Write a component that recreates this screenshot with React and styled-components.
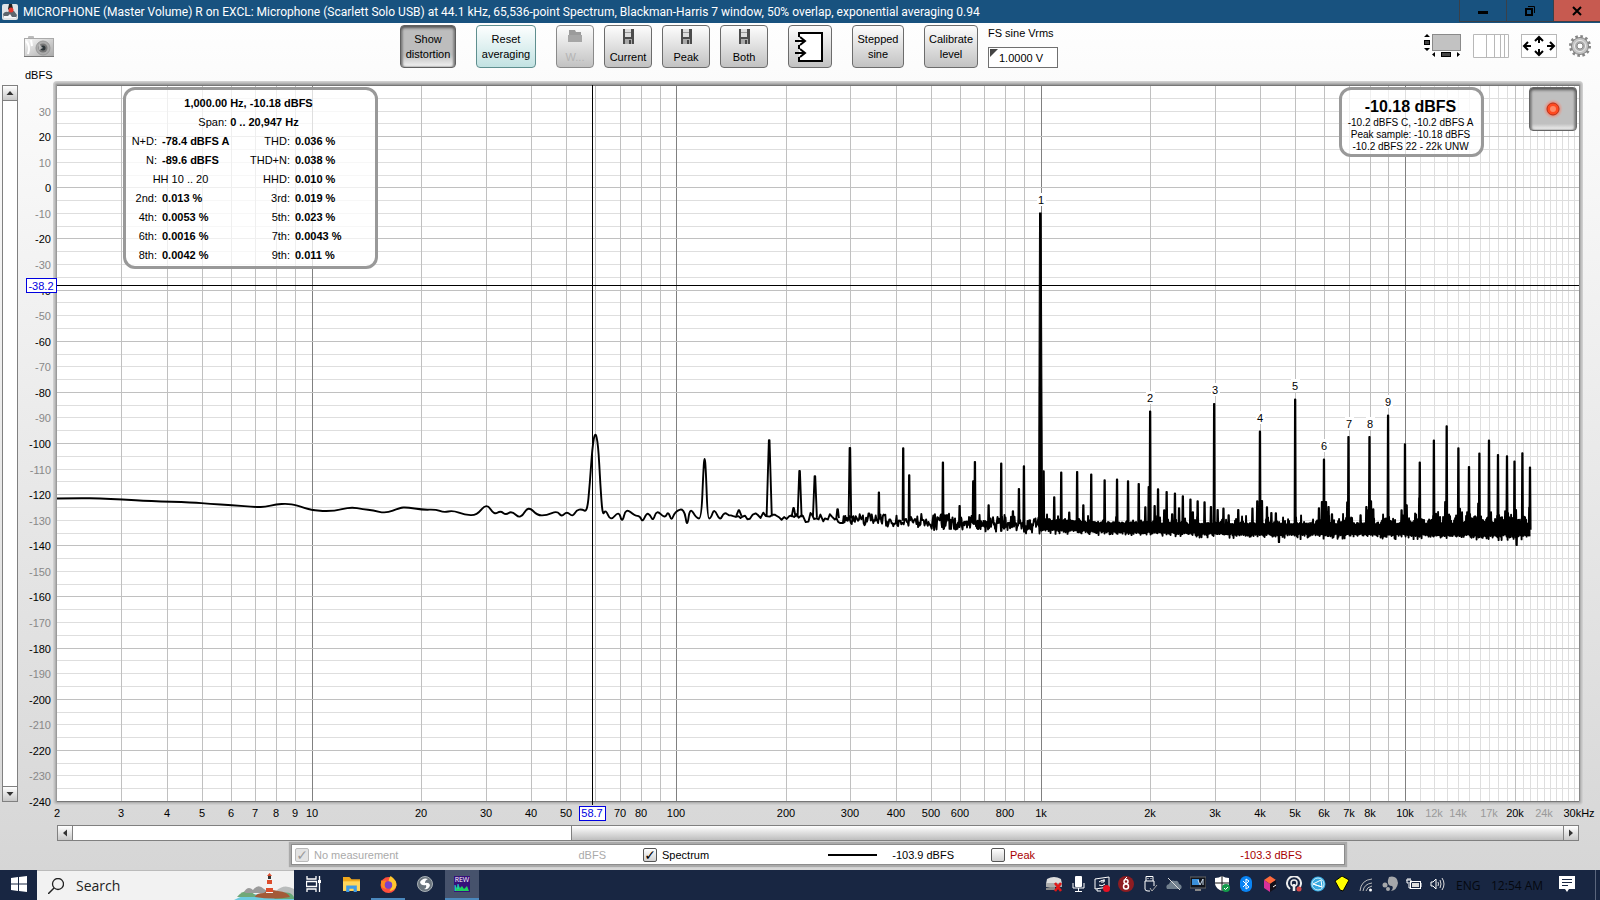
import React, { useLayoutEffect, useRef, useState } from "react";
import styled, { createGlobalStyle } from "styled-components";

const Colors = {
    title: "#18527f",
    taskbar: "#182642",
    line: "#808080",
    peak: "#a80000",
    cursor: "#0000e0",
};

const Global = createGlobalStyle`
    *{
        box-sizing: border-box;
    }
    body{
        margin: 0;
        font-family: "Liberation Sans", Arial, sans-serif;
        font-size: 11px;
        color: #000;
    }
    button, input{
        font-family: inherit;
        font-size: inherit;
        color: inherit;
        margin: 0;
        padding: 0;
    }
`;

const Window = styled.div`
    height: 100vh;
    min-height: 480px;
    display: flex;
    flex-direction: column;
    overflow: hidden;
    background: linear-gradient(#fefefe 23px, #d6d6d6 870px);
`;

/* title bar */

const TitleBar = styled.header`
    display: flex;
    align-items: center;
    height: 23px;
    flex: none;
    padding-left: 2px;
    background-color: ${Colors.title};
    color: #fff;
`;

const TitleText = styled.h1`
    flex: 1;
    margin: 0 0 0 5px;
    font-family: Roboto, "Open Sans", sans-serif;
    font-size: 12px;
    font-weight: 400;
    line-height: 22px;
    white-space: nowrap;
    overflow: hidden;
`;

const WindowBtn = styled.button`
    width: 47px;
    height: 22px;
    align-self: flex-start;
    display: flex;
    align-items: center;
    justify-content: center;
    border: 1px solid #3a4048;
    border-width: 0 0 1px 1px;
    background-color: ${(p) => (p.$close ? "#c75a50" : "transparent")};
`;

/* toolbar */

const Toolbar = styled.div`
    display: grid;
    grid-template-columns: 25% auto 1fr;
    align-items: start;
    flex: none;
    height: 46px;
    padding-top: 2px;
`;

const IconBtn = styled.button`
    display: flex;
    border: none;
    background: none;
`;

const Camera = styled(IconBtn)`
    margin: 11px 0 0 24px;
`;

const Tools = styled.div`
    display: flex;
    gap: 20px;
`;

const ToolGroup = styled.div`
    display: flex;
    gap: 10px;
`;

const ToolBtn = styled.button`
    display: flex;
    flex-direction: column;
    align-items: center;
    justify-content: center;
    width: ${(p) => p.$width}px;
    height: 43px;
    line-height: 15px;
    border: 1px solid #6c6c6c;
    border-radius: 4px;
    background: linear-gradient(#fdfdfd, #c2c2c2);
    ${(p) => p.$fresh && `
        border-color: #5f8f8f;
        background: linear-gradient(#fdffff, #c2e2e2);
    `}
    ${(p) => p.$pressed && `
        border-color: #606060;
        background: linear-gradient(#bdbdbd 70%, #f4f4f4);
        box-shadow: inset 0 2px 3px #555, inset 2px 0 2px #999, inset -2px 0 2px #999;
    `}
    &:disabled{
        color: #b4b4b4;
        border-color: #8a8a8a;
    }
    svg{
        flex: none;
        margin-bottom: ${(p) => (p.$stacked ? "6px" : "0")};
    }
`;

const Field = styled.label`
    display: flex;
    flex-direction: column;
    width: 70px;
    margin-left: -10px;
    line-height: 16px;
    white-space: nowrap;
`;

const FieldBox = styled.span`
    position: relative;
    margin-top: 6px;
    &::after{
        content: "";
        position: absolute;
        left: 2px;
        top: 2px;
        border-top: 8px solid #444;
        border-right: 8px solid transparent;
    }
`;

const Input = styled.input`
    display: block;
    width: 100%;
    height: 21px;
    padding-left: 10px;
    border: 1px solid #707070;
    background-color: #fff;
    outline: none;
`;

const RightTools = styled.div`
    display: flex;
    justify-content: flex-end;
    align-items: center;
    gap: 12px;
    padding: 9px 9px 0 0;
`;

/* graph */

const GraphRow = styled.div`
    display: flex;
    flex: 1;
    min-height: 0;
`;

const GraphArea = styled.div`
    position: relative;
    flex: 1;
    min-width: 0;
`;

const GraphSvg = styled.svg`
    position: absolute;
    inset: 0;
    display: block;
    width: 100%;
    height: 100%;
    font-size: 11px;
`;

const VScroll = styled.div`
    display: flex;
    flex-direction: column;
    justify-content: space-between;
    width: 16px;
    margin: 16px 2px 23px 2px;
    border: 1px solid ${Colors.line};
    background-color: #fff;
`;

const HScroll = styled.div`
    display: flex;
    flex: none;
    height: 16px;
    margin: 0 21px 0 57px;
    border: 1px solid ${Colors.line};
    background-color: #fff;
`;

const ScrollBtn = styled.button`
    display: flex;
    align-items: center;
    justify-content: center;
    width: ${(p) => (p.$vertical ? "100%" : "15px")};
    height: ${(p) => (p.$vertical ? "15px" : "100%")};
    border: 0 solid ${Colors.line};
    border-width: ${(p) => p.$edge};
    background: linear-gradient(#fff, #c8c8c8);
`;

const Track = styled.div`
    flex: 498;
`;

const Thumb = styled.div`
    flex: 992;
    border-left: 1px solid ${Colors.line};
    background: linear-gradient(#fff, #bebebe);
`;

const Panel = styled.section`
    position: absolute;
    top: 18px;
    border: 3px solid #999;
    border-radius: 12px;
    background-color: rgba(255, 255, 255, 0.75);
`;

const DistortionPanel = styled(Panel)`
    left: 103px;
    width: 255px;
    height: 182px;
    padding-top: 4px;
    line-height: 19px;
    p{
        margin: 0;
        padding-right: 4px;
        text-align: center;
    }
`;

const Readings = styled.dl`
    display: grid;
    grid-template-columns: 31px 79px 44px 1fr;
    column-gap: 5px;
    margin: 0;
    dt{
        text-align: right;
        white-space: nowrap;
    }
    dd{
        margin: 0;
        font-weight: 700;
    }
`;

const Range = styled.dt`
    grid-column: span 2;
    padding-right: 6px;
    && {
        text-align: center;
    }
`;

const LevelPanel = styled(Panel)`
    right: 116px;
    width: 145px;
    height: 70px;
    padding: 7px 2px 0 0;
    text-align: center;
    font-size: 10px;
    line-height: 12px;
    white-space: nowrap;
    h2{
        margin: 0 0 1px;
        font-size: 16px;
        line-height: 19px;
    }
    p{
        margin: 0;
    }
`;

const RecordBtn = styled.button`
    position: absolute;
    top: 18px;
    right: 23px;
    width: 48px;
    height: 44px;
    display: flex;
    align-items: center;
    justify-content: center;
    border: 1px solid #666;
    border-radius: 4px;
    background: linear-gradient(#c0c0c0 85%, #f4f4f4);
    box-shadow: inset 0 2px 3px #555, inset 2px 0 2px #999, inset -2px 0 2px #999;
`;

/* legend */

const Legend = styled.div`
    display: grid;
    grid-template-columns: repeat(3, 1fr);
    flex: none;
    height: 21px;
    margin: 3px 255px 5px 291px;
    padding: 0 5px 0 3px;
    border: 1px solid #8c8c8c;
    background-color: #fff;
    box-shadow: 0 0 1px 2px #aaa;
`;

const Trace = styled.div`
    display: flex;
    align-items: center;
    padding-right: 37px;
    color: ${(p) => p.$color};
    label{
        flex: 1;
        padding-left: 5px;
    }
    svg{
        margin-right: 15px;
    }
`;

const Check = styled.input`
    appearance: none;
    width: 14px;
    height: 14px;
    border: 1px solid #555;
    border-radius: 2px;
    background: linear-gradient(#fff, #d0d0d0);
    display: grid;
    place-items: center;
    &:checked::after{
        content: "✓";
        color: #000;
        font: 700 14px/12px "DejaVu Sans", sans-serif;
    }
    &:disabled{
        opacity: 0.4;
        background: #bbb;
    }
`;

/* taskbar */

const Taskbar = styled.footer`
    display: flex;
    flex: none;
    height: 30px;
    background-color: ${Colors.taskbar};
    font-family: "Open Sans", "Noto Sans", sans-serif;
`;

const TaskBtn = styled.button`
    display: flex;
    align-items: center;
    justify-content: center;
    width: 37px;
    height: 100%;
    border: none;
    background-color: ${(p) => (p.$active ? "#46526c" : "transparent")};
    border-bottom: 2px solid ${(p) => (p.$running ? "#4b88bd" : "transparent")};
`;

const AppBtn = styled(TaskBtn)`
    width: 34px;
    margin-right: 3px;
`;

const Search = styled.label`
    display: flex;
    align-items: center;
    width: 257px;
    padding-left: 11px;
    border-top: 1px solid #bbb;
    background-color: #f2f2f2;
    overflow: hidden;
    svg{
        flex: none;
    }
    input{
        flex: 1;
        min-width: 0;
        margin-left: 12px;
        border: none;
        outline: none;
        background: none;
        font-size: 14px;
    }
    input::placeholder{
        color: #222;
        opacity: 1;
    }
`;

const Apps = styled.nav`
    display: flex;
    flex: 1;
    padding-left: 3px;
`;

const Tray = styled.div`
    display: flex;
    align-items: center;
    color: #05080f;
    font-size: 12px;
    white-space: nowrap;
    ${TaskBtn}{
        width: 24px;
    }
`;

const Language = styled.span`
    width: 36px;
    padding-left: 6px;
`;

const Clock = styled.time`
    width: 69px;
    padding-left: 5px;
`;

const ShowDesktop = styled.button`
    width: 5px;
    height: 100%;
    margin-left: 16px;
    border: none;
    border-left: 1px solid #5b667d;
    background: none;
`;

/* Trace below 120 Hz, in the units of the trace's own viewBox */
const LOW = [
    [57, 498.3], [80, 498], [100, 498.3], [121.7, 499.3], [150, 501], [193, 502.3], [210, 503.7], [231.7, 505],
    [256.7, 507], [265, 506.7], [276.7, 504.3], [286.7, 503.5], [296.7, 505], [312.3, 510.3], [333.3, 511.3], [351, 506.7],
    [363.3, 509.3], [373, 510], [386, 513.3], [400, 507.7], [406.7, 507], [423, 509.7], [436, 509.3], [444, 512.3],
    [453, 510.3], [465, 514.7], [476.7, 515.3], [486.7, 503], [494.3, 514.7], [500.7, 510.5], [506, 515], [511.7, 510.7],
    [520.7, 519], [528.3, 505.7], [537.7, 515.5], [546.7, 515], [557.3, 510.7], [561.7, 516.7], [567, 511.3], [572.7, 516.7],
    [576.7, 510], [582, 509], [587.3, 512], [590, 483], [592.5, 447], [595.3, 431], [598.3, 444], [600.5, 485], [602.7, 516],
    [605.7, 509], [610.7, 521], [619, 510.7], [622.3, 523], [626, 508], [635, 515.7], [640, 515.7], [642.7, 522],
    [646.7, 513], [650, 514.3], [653.3, 521], [656.7, 509.7], [665, 518.3], [668.3, 511], [671.7, 521], [675, 511.3],
    [684.3, 508], [687.3, 528], [690, 507], [696.7, 518.3], [701.5, 518.3], [703.5, 470], [704.7, 455], [706, 470],
    [707.7, 518.3], [711, 518.3], [714.3, 508], [720, 521], [724.3, 511.7], [730, 516],
];

const PEAKS = [
    [739, 510], [769.3, 440], [793.7, 507.7], [799.7, 470.7], [815, 476], [837.7, 509], [850, 447.7], [879, 492.3],
    [903.3, 448], [909.3, 475], [943, 462.3], [959.7, 505.7], [973.3, 481], [975, 461.7], [988.7, 505], [1001.3, 463.3],
    [1013, 511], [1019, 488.7], [1024, 466], [1043.7, 471], [1054.3, 497], [1061.3, 472.3], [1069.3, 512.3],
    [1077.2, 471.7], [1083.4, 505], [1091.3, 474.3], [1104.7, 480], [1117.1, 479.3], [1128.1, 481], [1138.8, 483.7],
    [1145.4, 507], [1148.8, 486.7], [1150.2, 411.3], [1154.7, 505.7], [1158.1, 489], [1164.3, 510], [1166.7, 491.7],
    [1172.2, 514], [1175, 493.3], [1179.1, 508], [1182.9, 496], [1190.5, 499.3], [1192.9, 512], [1197.7, 501],
    [1204.6, 502], [1211, 506.7], [1214.2, 403.7], [1217.7, 509.7], [1223.5, 508.3], [1228.7, 515], [1238.3, 509.7],
    [1252.5, 508.3], [1257.3, 501], [1260, 431.3], [1262, 500.7], [1267, 507], [1271.4, 512.7], [1275.9, 513],
    [1279, 542], [1295.2, 399.3], [1319, 508], [1322, 501.7], [1324, 459.3], [1326, 501.7], [1328.6, 506.7], [1332, 514],
    [1348.5, 436.7], [1360.6, 515], [1366.4, 506.7], [1369.5, 436.7], [1371, 501], [1373.3, 509], [1388.1, 415.3],
    [1401.6, 510], [1405, 444], [1406.7, 505], [1419.8, 462.3], [1433.9, 440.3], [1446.7, 426], [1458.4, 448],
    [1469, 466.7], [1479.4, 453.3], [1489, 440.3], [1498, 454.7], [1507, 456], [1514.5, 461.3], [1516.6, 545],
    [1522.4, 453], [1530, 467.3],
];

const HARMONICS = [
    [1, -10.2], [2, -87.6], [3, -84.5], [4, -95.4], [5, -82.9], [6, -106.3], [7, -97.5], [8, -97.5], [9, -89],
];

const lerp = (stops, x) => {
    for (let i = 1; i < stops.length; i++) {
        if (x <= stops[i][0]) {
            const [x0, a] = stops[i - 1];
            const [x1, b] = stops[i];
            return a + ((b - a) * (x - x0)) / (x1 - x0);
        }
    }
    return stops[stops.length - 1][1];
};

const FLOOR = [[730, 515.5], [840, 518], [940, 522], [1040, 524.5], [1100, 527], [1240, 529], [1530, 529.5]];
const SPREAD = [[730, 4], [840, 5], [880, 6], [940, 7], [1040, 8], [1100, 7], [1240, 8], [1530, 9]];

const lowPath = () => {
    let d = `M${LOW[0]}`;
    for (let i = 1; i < LOW.length - 1; i++) {
        const [x, y] = LOW[i];
        const [nx, ny] = LOW[i + 1];
        d += `Q${x} ${y} ${(x + nx) / 2} ${(y + ny) / 2}`;
    }
    return d;
};

const noisePath = () => {
    let seed = 7;
    const rand = () => {
        seed = (seed * 16807) % 2147483647;
        return seed / 2147483647;
    };
    let d = "";
    let up = true;
    let x = 729;
    while (x < 1530) {
        const floor = lerp(FLOOR, x);
        let spread = lerp(SPREAD, x);
        let offset;
        if (x < 1040) {
            // loose wander: bins are still wide enough to tell apart
            offset = (rand() + rand() - 1) * spread * 1.3;
        } else {
            // skirts around the strong high harmonics
            const near = PEAKS.find((p) => x > 1310 && p[1] < 470 && Math.abs(p[0] - x) < 6);
            if (near && up) {
                spread += (6 - Math.abs(near[0] - x)) * 2;
            }
            const r = rand();
            const amp = spread * (0.5 + r * 0.35 + (up ? 0.9 : 0.35) * r ** 10);
            offset = up ? -amp : amp;
        }
        d += `L${x.toFixed(1)} ${(floor + offset).toFixed(1)}`;
        up = !up;
        x += x < 840 ? 1.6 + rand() * 1.4 : x < 940 ? 0.8 : 0.5;
    }
    return d;
};

const peaksPath = () =>
    PEAKS.map(([x, y]) => {
        const floor = lerp(FLOOR, x);
        const half = x < 780 ? 2.6 : x < 830 ? 2 : x < 870 ? 1.3 : 0.6;
        const tip = x < 870 ? 0.3 : 0.2;
        return `M${x - half} ${floor}L${x - tip} ${y}L${x + tip} ${y}L${x + half} ${floor}`;
    }).join("");

const TRACE = lowPath() + noisePath() + peaksPath();

const DB = Array.from({ length: 57 }, (_, i) => 40 - i * 5);

const FREQS = [];
for (let decade = 1; decade <= 1000; decade *= 10) {
    for (let n = 1; n < 10; n++) {
        if (n * decade > 2) FREQS.push(n * decade);
    }
}
for (let k = 10; k < 30; k++) {
    FREQS.push(k * 1000);
}

const FREQ_LABELS = [
    2, 3, 4, 5, 6, 7, 8, 9, 10, 20, 30, 40, 50, 70, 80, 100, 200, 300, 400, 500, 600, 800,
    1000, 2000, 3000, 4000, 5000, 6000, 7000, 8000, 10000, 12000, 14000, 17000, 20000, 24000, 30000,
];

const freqText = (f) => (f === 30000 ? "30kHz" : f >= 1000 ? `${f / 1000}k` : `${f}`);

const freqColor = (f) => {
    if ([10, 100, 1000, 10000].includes(f)) return "#808080";
    if (f > 10000 && f !== 20000) return "#dedede";
    return "#c0c0c0";
};

const Graph = () => {
    const ref = useRef(null);
    const [size, setSize] = useState({ w: 1580, h: 756 });

    useLayoutEffect(() => {
        const update = () => setSize({ w: ref.current.clientWidth, h: ref.current.clientHeight });
        const observer = new ResizeObserver(update);
        observer.observe(ref.current);
        update();
        return () => observer.disconnect();
    }, []);

    const left = 37;
    const top = 16;
    const width = size.w - left - 21;
    const height = size.h - top - 24;
    const right = left + width;
    const bottom = top + height;
    const fx = (f) => Math.round(left + (Math.log10(f / 2) / Math.log10(15000)) * width);
    const dy = (db) => Math.round(top + ((40 - db) / 280) * height);
    const cx = fx(58.7);
    const cy = dy(-38.2);

    return (
        <GraphArea ref={ref}>
            <GraphSvg role="img" aria-label="Spectrum">
                {["#cfcfcf", "#c2c2c2", "#b0b0b0", "#9a9a9a"].map((c, i) => (
                    <rect key={c} x={left - 4 + i} y={top - 4 + i} width={width + 8 - 2 * i} height={height + 8 - 2 * i} rx={4 - i} fill={c} />
                ))}
                <rect x={left} y={top} width={width} height={height} fill="#fff" />
                <g shapeRendering="crispEdges">
                    {DB.filter((db) => db % 20).map((db) => (
                        <rect key={db} x={left} y={dy(db)} width={width} height="1" fill="#dedede" />
                    ))}
                    {FREQS.map((f) => (
                        <rect key={f} x={fx(f)} y={top} width="1" height={height} fill={freqColor(f)} />
                    ))}
                    {DB.filter((db) => db % 20 === 0).map((db) => (
                        <rect key={db} x={left} y={dy(db)} width={width} height="1" fill="#c0c0c0" />
                    ))}
                    <rect x={left} y={top} width={width} height="1" fill="#777" />
                    <rect x={left} y={bottom} width={width} height="1" fill="#777" />
                    <rect x={right} y={top} width="1" height={height} fill="#888" />
                </g>
                <g textAnchor="middle">
                    {HARMONICS.map(([n, db]) => (
                        <g key={n}>
                            <rect x={fx(n * 1000) - 4} y={dy(db) - 20} width="9" height="13" fill="#fff" />
                            <text x={fx(n * 1000)} y={dy(db) - 9}>{n}</text>
                        </g>
                    ))}
                </g>
                <svg x={left} y={top} width={width} height={height} viewBox="57.2 84.9 1521.8 715.9" preserveAspectRatio="none">
                    <path d={TRACE} fill="none" stroke="#000" strokeWidth="1.9" strokeLinejoin="round" vectorEffect="non-scaling-stroke" />
                    <path d="M1038.6 526L1039.6 213H1041.2L1042.6 526Z" stroke="#000" />
                </svg>
                <text x="5" y="10">dBFS</text>
                <g textAnchor="end">
                    {DB.filter((db) => db % 10 === 0 && db < 40).map((db) => (
                        <text key={db} x="31" y={dy(db) + 5} fill={db % 20 ? "#888" : "#000"}>{db}</text>
                    ))}
                </g>
                <g textAnchor="middle">
                    {FREQ_LABELS.map((f) => (
                        <text key={f} x={fx(f)} y={bottom + 16} fill={f > 10000 && f < 30000 && f !== 20000 ? "#999" : "#000"}>{freqText(f)}</text>
                    ))}
                </g>
                <g shapeRendering="crispEdges">
                    <rect x="36" y={cy} width={right - 36} height="1" />
                    <rect x={cx} y={top} width="1" height={height + 4} />
                    <rect x="6" y={cy - 7} width="30" height="14" fill="#fff" stroke={Colors.cursor} />
                    <rect x={cx - 13} y={bottom + 5} width="26" height="14" fill="#fff" stroke={Colors.cursor} />
                </g>
                <g textAnchor="middle" fill={Colors.cursor}>
                    <text x="21" y={cy + 5}>-38.2</text>
                    <text x={cx} y={bottom + 16}>58.7</text>
                </g>
            </GraphSvg>
            <DistortionPanel>
                <p><b>1,000.00 Hz, -10.18 dBFS</b></p>
                <p>Span: <b>0 .. 20,947 Hz</b></p>
                <Readings>
                    <dt>N+D:</dt><dd>-78.4 dBFS A</dd><dt>THD:</dt><dd>0.036 %</dd>
                    <dt>N:</dt><dd>-89.6 dBFS</dd><dt>THD+N:</dt><dd>0.038 %</dd>
                    <Range>HH 10 .. 20</Range><dt>HHD:</dt><dd>0.010 %</dd>
                    <dt>2nd:</dt><dd>0.013 %</dd><dt>3rd:</dt><dd>0.019 %</dd>
                    <dt>4th:</dt><dd>0.0053 %</dd><dt>5th:</dt><dd>0.023 %</dd>
                    <dt>6th:</dt><dd>0.0016 %</dd><dt>7th:</dt><dd>0.0043 %</dd>
                    <dt>8th:</dt><dd>0.0042 %</dd><dt>9th:</dt><dd>0.011 %</dd>
                </Readings>
            </DistortionPanel>
            <LevelPanel>
                <h2>-10.18 dBFS</h2>
                <p>-10.2 dBFS C, -10.2 dBFS A</p>
                <p>Peak sample: -10.18 dBFS</p>
                <p>-10.2 dBFS 22 - 22k UNW</p>
            </LevelPanel>
            <RecordBtn aria-label="Record">
                <svg width="22" height="22" viewBox="0 0 22 22">
                    <defs>
                        <radialGradient id="glow">
                            <stop offset="50%" stopColor="#ff5030" stopOpacity="0.7" />
                            <stop offset="100%" stopColor="#ff9080" stopOpacity="0" />
                        </radialGradient>
                    </defs>
                    <circle cx="11" cy="11" r="10" fill="url(#glow)" />
                    <circle cx="11" cy="11" r="6" fill="#ff4a20" stroke="#b83018" />
                    <circle cx="11" cy="11" r="3" fill="#ff8a68" />
                </svg>
            </RecordBtn>
        </GraphArea>
    );
};

/* icons */

const Arrow = ({ turn }) => (
    <svg width="8" height="8" viewBox="0 0 8 8">
        <path d="M4 2L7.500 6H.5Z" fill="#333" transform={`rotate(${turn} 4 4)`} />
    </svg>
);

const JavaIcon = () => (
    <svg width="16" height="16" viewBox="0 0 16 16">
        <rect width="16" height="16" rx="2" fill="#dfe3e6" />
        <path d="M1 10Q3 7 6 8L8 6L12 7L15 11L14 14H2Z" fill="#5d666e" />
        <path d="M2 12H6L8 10L10 13H14V14H2Z" fill="#f4f6f8" />
        <path d="M7 0H10L11 5L8 7L6 5Z" fill="#222" />
        <circle cx="9" cy="6" r="2.500" fill="#e4362c" />
    </svg>
);

const CameraIcon = () => (
    <svg width="30" height="22" viewBox="0 0 30 22">
        <defs>
            <linearGradient id="cam" x1="0" x2="1" y2="1">
                <stop offset="0" stopColor="#fafafa" />
                <stop offset="1" stopColor="#a8a8a8" />
            </linearGradient>
        </defs>
        <rect x="4" y="0" width="6" height="3" rx="1" fill="#bbb" />
        <rect x="0.500" y="2.500" width="29" height="18" fill="url(#cam)" stroke="#aaa" />
        <path d="M0 20.500H30" stroke="#777" />
        <path d="M2 5Q7 10 4 18M7 4L8 10" fill="none" stroke="#fff" strokeWidth="2" />
        <circle cx="19" cy="12" r="7" fill="#ababab" stroke="#999" />
        <circle cx="19" cy="12" r="4.500" fill="#777" />
        <circle cx="19" cy="12" r="2.500" fill="#2c3438" />
        <path d="M15 8L19 12L15 14Z" fill="#d8d8d8" opacity="0.700" />
    </svg>
);

const FolderIcon = () => (
    <svg width="14" height="15" viewBox="0 0 14 15">
        <path d="M1 1H7L8 3H13V8H1Z" fill="#9b9b9b" />
        <path d="M0 6H14V13H0Z" fill="#a6a6a6" />
    </svg>
);

const FloppyIcon = () => (
    <svg width="15" height="15" viewBox="0 0 15 15">
        <path d="M2 0H13V15H2Z" fill="#4c4c4c" />
        <rect x="4" y="0" width="6" height="8" fill="#ddd" />
        <rect x="4" y="3" width="6" height="1" fill="#999" />
        <rect x="4" y="10" width="7" height="5" fill="#aaa" />
        <rect x="8" y="11" width="2" height="4" fill="#444" />
    </svg>
);

const InputsIcon = () => (
    <svg width="30" height="32" viewBox="0 0 30 32">
        <rect x="4" y="2" width="23" height="28" fill="#fff" />
        <path d="M4 6V2H27V30H4V26M4 14V18" fill="none" stroke="#000" strokeWidth="2" />
        <path d="M0 10H9M5 6L10 10L5 14M0 22H9M5 18L10 22L5 26" fill="none" stroke="#000" strokeWidth="2" />
    </svg>
);

const ScrollbarsIcon = () => (
    <svg width="37" height="24" viewBox="0 0 37 24">
        <rect x="8.500" y="0.500" width="28" height="16" fill="#c2c2c2" stroke="#8a8a8a" />
        <path d="M0 3L3 0L6 3ZM0 14L3 17L6 14ZM11 18V23L8 20.500ZM33 18V23L36 20.500Z" />
        <rect x="0.500" y="6.500" width="5" height="4" fill="#444" stroke="#000" />
        <rect x="17.500" y="18.500" width="9" height="4" fill="#444" stroke="#000" />
    </svg>
);

const LogAxisIcon = () => (
    <svg width="36" height="24" viewBox="0 0 36 24">
        <path d="M.5 .5H35.500V23.500H.5ZM13.500 0V24M21.500 0V24M27.500 0V24M31.500 0V24" fill="#fff" stroke="#b8b8b8" />
    </svg>
);

const LimitsIcon = () => (
    <svg width="36" height="24" viewBox="0 0 36 24">
        <rect x="0.500" y="0.500" width="35" height="23" fill="#fff" stroke="#b8b8b8" />
        <path d="M18 3V9M14 7L18 3L22 7M18 21V15M14 17L18 21L22 17M3 12H10M7 8L3 12L7 16M33 12H26M29 8L33 12L29 16" fill="none" stroke="#000" strokeWidth="2" />
    </svg>
);

const GearIcon = () => (
    <svg width="22" height="22" viewBox="0 0 22 22">
        <circle cx="11" cy="11" r="9.500" fill="none" stroke="#858585" strokeWidth="3" strokeDasharray="2.500 2.480" />
        <circle cx="11" cy="11" r="8.500" fill="#c4c4c4" stroke="#808080" />
        <circle cx="11" cy="11" r="5.500" fill="#aaa" stroke="#eee" />
        <circle cx="11" cy="11" r="3" fill="#fff" stroke="#888" />
    </svg>
);

const Glyph = ({ children, size = 16 }) => (
    <svg width={size} height={size} viewBox="0 0 16 16" fill="none">{children}</svg>
);

const Lighthouse = () => (
    <svg width="60" height="29" viewBox="0 0 60 29">
        <path d="M0 29Q14 21 32 24L60 27V29Z" fill="#6ccbe0" />
        <path d="M3 26Q8 19 16 20L24 26Z" fill="#70a878" />
        <path d="M10 21Q14 14 19 19Q24 12 30 18Q34 20 32 22H12Z" fill="#9b9b9b" />
        <path d="M42 20Q50 12 60 18V26L46 24Z" fill="#b9bcbc" />
        <path d="M44 23Q56 19 60 26V28H40Z" fill="#67a877" />
        <path d="M21 26Q22 22 30 22Q34 17 44 20Q54 21 56 26Q40 29 21 26Z" fill="#a35a38" />
        <path d="M33 8H38L39 22H32Z" fill="#f4f4f4" />
        <path d="M33 9H38V13H33ZM32 17H39V21H32Z" fill="#dd4d2c" />
        <rect x="34" y="5" width="3" height="3" fill="#333" />
        <path d="M33 5L35.500 2L38 5Z" fill="#dd4d2c" />
    </svg>
);

const TRAY = [
    ["Drive", <><path d="M1 3Q8-1 15 3L16 8H0Z" fill="#ddd" /><path d="M0 7H16V11H0Z" fill="#aaa" /><path d="M4 11H9V14H0V12Z" fill="#888" /><path d="M9 7L15 15M15 7L9 15" stroke="#e01818" strokeWidth="2.500" /></>],
    ["Microphone", <><rect x="5" y="0" width="7" height="11" rx="1" fill="#fff" /><path d="M3 7V12H14V7M8.500 12V15M5 15.500H12" stroke="#fff" /></>],
    ["Screen", <><path d="M1 3L15 1V11L1 13ZM3 13V15H7" stroke="#fff" /><path d="M5 6Q8 3 11 5M11 8Q8 11 5 9M10 3V6H7" stroke="#fff" /><circle cx="12.500" cy="12.500" r="3.500" fill="#e81123" /></>],
    ["Audio", <><circle cx="8" cy="8" r="8" fill="#8e1d22" /><circle cx="8" cy="5.500" r="2" stroke="#fff" strokeWidth="1.500" /><circle cx="8" cy="10.500" r="2.500" stroke="#fff" strokeWidth="1.500" /><path d="M9 1L7 3" stroke="#fff" /></>],
    ["USB", <><path d="M4 5V.5H11V5M3 5H12V10M3 5V13Q3 15 6 15H8M6 2V3M9 2V3" stroke="#fff" /><path d="M8 12L10 15L15 9" stroke="#aaa" /></>],
    ["Cloud", <><path d="M1 13Q-1 9 3 8Q5 3 9 5Q12 4 13 8Q17 9 15 13Z" fill="#71808e" /><path d="M2 2L14 14" stroke="#ddd" /></>],
    ["Display", <><rect x="0" y="1" width="16" height="11" fill="#10141c" stroke="#666" /><path d="M2 3H9V9H2Z" fill="#3a8fd8" /><path d="M8 4L10 9L13 3V9" stroke="#cde" /><path d="M5 14H11" stroke="#888" strokeWidth="2" /></>],
    ["Security", <><path d="M8 0Q11 2 15 2V8Q14 13 8 15Q2 13 1 8V2Q5 2 8 0Z" fill="#fff" /><path d="M8 0V15M1 7H15" stroke="#111" /><circle cx="12" cy="12" r="4" fill="#149a4a" /><path d="M10 12L11.500 13.500L14 11" stroke="#fff" /></>],
    ["Bluetooth", <><rect x="2" y="0" width="12" height="16" rx="6" fill="#0a84f4" /><path d="M5 5L11 11L8 13V3L11 5L5 11" stroke="#fff" /></>],
    ["Toolbox", <><path d="M2 4L8 0L14 4L8 8Z" fill="#ff6a3c" /><path d="M2 4L8 8V16L2 12Z" fill="#d8309a" /><path d="M8 8L14 4V12L8 16Z" fill="#151018" /><path d="M11 11L14 9" stroke="#fff" /></>],
    ["Podcast", <><path d="M4 13A7 7 0 1 1 12 13" stroke="#eee" strokeWidth="2" /><circle cx="8" cy="7" r="3" stroke="#eee" strokeWidth="1.500" /><path d="M8 8V15" stroke="#eee" strokeWidth="2.500" /><circle cx="13" cy="13" r="2.500" fill="#d84848" /></>],
    ["Network", <><circle cx="8" cy="8" r="7.500" fill="#35a8e0" /><circle cx="8" cy="8" r="6" stroke="#c8ecfa" /><path d="M3 8L11 4L12 11ZM3 8L12 11" stroke="#fff" /></>],
    ["Sticker", <path d="M1 5L8 0L15 4L9 15L6 14Z" fill="#ffff00" stroke="#000" />],
    ["Wi-Fi", <><path d="M2 15Q3 4 14 3M5 15Q6 8 14 7M8 15Q9 11 14 10" stroke="#bbb" /><circle cx="12.500" cy="14" r="1.500" fill="#fff" /></>],
    ["Swirl", <><path d="M7 1Q15-1 16 7Q15 14 9 15Q12 12 10 10Q5 10 6 4Z" fill="#a5a7aa" /><circle cx="3" cy="9" r="2.500" fill="#a5a7aa" /><circle cx="6" cy="13" r="2" fill="#a5a7aa" /></>],
    ["Battery", <><rect x="4.500" y="5.500" width="10" height="7" stroke="#fff" /><path d="M6 7H13V11H6Z" fill="#ddd" /><path d="M16 7V11M0 4H5V7H1V4M2 2V4M4 2V4M3 8V12H5" stroke="#fff" /></>],
    ["Volume", <><path d="M1 6H3L6 3V13L3 10H1Z" stroke="#fff" /><path d="M8 6Q9 8 8 10M10 4Q12 8 10 12M12 2Q16 8 12 14" stroke="#ddd" /></>],
];

const App = () => {
    const saves = ["Current", "Peak", "Both"];
    return (
        <Window>
            <Global />
            <TitleBar>
                <JavaIcon />
                <TitleText>
                    MICROPHONE (Master Volume) R on EXCL: Microphone (Scarlett Solo USB) at 44.1 kHz, 65,536-point Spectrum, Blackman-Harris 7 window, 50% overlap, exponential averaging 0.94
                </TitleText>
                <WindowBtn aria-label="Minimize">
                    <svg width="10" height="10"><rect y="5" width="10" height="3" /></svg>
                </WindowBtn>
                <WindowBtn aria-label="Restore">
                    <svg width="10" height="10"><path d="M1 3H7V9H1Z" fill="none" stroke="#000" strokeWidth="2" /><path d="M3 .5H9.500V7" fill="none" stroke="#000" /></svg>
                </WindowBtn>
                <WindowBtn $close aria-label="Close">
                    <svg width="10" height="10"><path d="M1 1L9 9M9 1L1 9" stroke="#000" strokeWidth="2" /></svg>
                </WindowBtn>
            </TitleBar>
            <Toolbar>
                <Camera aria-label="Capture"><CameraIcon /></Camera>
                <Tools>
                    <ToolBtn $width={56} $pressed>Show<br />distortion</ToolBtn>
                    <ToolBtn $width={60} $fresh>Reset<br />averaging</ToolBtn>
                    <ToolGroup>
                        <ToolBtn $width={38} $stacked disabled><FolderIcon />W...</ToolBtn>
                        {saves.map((name) => (
                            <ToolBtn key={name} $width={48} $stacked><FloppyIcon />{name}</ToolBtn>
                        ))}
                    </ToolGroup>
                    <ToolBtn $width={44} aria-label="Inputs"><InputsIcon /></ToolBtn>
                    <ToolBtn $width={52}>Stepped<br />sine</ToolBtn>
                    <ToolBtn $width={54}>Calibrate<br />level</ToolBtn>
                    <Field>
                        FS sine Vrms
                        <FieldBox><Input type="text" defaultValue="1.0000 V" /></FieldBox>
                    </Field>
                </Tools>
                <RightTools>
                    <IconBtn aria-label="Scrollbars"><ScrollbarsIcon /></IconBtn>
                    <IconBtn aria-label="Frequency axis"><LogAxisIcon /></IconBtn>
                    <IconBtn aria-label="Limits"><LimitsIcon /></IconBtn>
                    <IconBtn aria-label="Settings"><GearIcon /></IconBtn>
                </RightTools>
            </Toolbar>
            <GraphRow>
                <VScroll>
                    <ScrollBtn $vertical $edge="0 0 1px 0" aria-label="Up"><Arrow turn={0} /></ScrollBtn>
                    <ScrollBtn $vertical $edge="1px 0 0 0" aria-label="Down"><Arrow turn={180} /></ScrollBtn>
                </VScroll>
                <Graph />
            </GraphRow>
            <HScroll>
                <ScrollBtn $edge="0 1px 0 0" aria-label="Left"><Arrow turn={270} /></ScrollBtn>
                <Track />
                <Thumb />
                <ScrollBtn $edge="0 0 0 1px" aria-label="Right"><Arrow turn={90} /></ScrollBtn>
            </HScroll>
            <Legend>
                <Trace $color="#aaa">
                    <Check id="none" type="checkbox" defaultChecked disabled />
                    <label htmlFor="none">No measurement</label>
                    <span>dBFS</span>
                </Trace>
                <Trace $color="#000">
                    <Check id="spectrum" type="checkbox" defaultChecked />
                    <label htmlFor="spectrum">Spectrum</label>
                    <svg width="49" height="2"><rect width="49" height="2" /></svg>
                    <span>-103.9 dBFS</span>
                </Trace>
                <Trace $color={Colors.peak}>
                    <Check id="peak" type="checkbox" />
                    <label htmlFor="peak">Peak</label>
                    <span>-103.3 dBFS</span>
                </Trace>
            </Legend>
            <Taskbar>
                <TaskBtn aria-label="Start">
                    <Glyph><path d="M0 2L7 1V7.500H0ZM8 1L16 0V7.500H8ZM0 8.500H7V15L0 14ZM8 8.500H16V16L8 15Z" fill="#fff" /></Glyph>
                </TaskBtn>
                <Search>
                    <Glyph><circle cx="10" cy="6" r="5.500" stroke="#222" strokeWidth="1.300" /><path d="M6 10L0 16" stroke="#222" strokeWidth="1.500" /></Glyph>
                    <input type="text" placeholder="Search" />
                    <Lighthouse />
                </Search>
                <Apps>
                    <AppBtn aria-label="Task view">
                        <Glyph><path d="M1 0V3H10V0M1 16V13H10V16M.5 5.500H10.500V10.500H.5ZM13.500 0V16" stroke="#fff" strokeWidth="1.300" /><rect x="12" y="4" width="3" height="3" fill="#fff" /></Glyph>
                    </AppBtn>
                    <AppBtn aria-label="Files">
                        <Glyph size={17}><path d="M0 1H6L8 3H16V14H0Z" fill="#f0a81c" /><path d="M0 5H16V14H0Z" fill="#ffd65c" /><path d="M3 9H13V15H10V12H6V15H3Z" fill="#3f9be6" /></Glyph>
                    </AppBtn>
                    <AppBtn $running aria-label="Firefox">
                        <Glyph size={17}><circle cx="8" cy="8.500" r="7.500" fill="#ff4f3d" /><path d="M10 0Q16 4 15.500 9Q14 14 9 14Q13 8 8 5Q8 2 10 0Z" fill="#ffc72e" /><path d="M1 4Q4 5 6 4Q3 9 6 12Q2 12 1 9Z" fill="#ff8a1e" /><circle cx="8" cy="8.500" r="3.500" fill="#7a42c8" /></Glyph>
                    </AppBtn>
                    <AppBtn aria-label="Player">
                        <Glyph><circle cx="8" cy="8" r="7.500" fill="#6b757e" stroke="#a8b0b6" /><path d="M3 6Q6 1 11 3Q8 4 8 7Q12 6 13 9Q12 14 7 13Q10 12 9 9Q4 10 3 6Z" fill="#fff" /></Glyph>
                    </AppBtn>
                    <AppBtn $active $running aria-label="REW">
                        <svg width="16" height="16" viewBox="0 0 16 16">
                            <rect width="16" height="16" fill="#37107a" />
                            <path d="M1 15V9L3 12L4 8L6 12L8 10L10 13L13 10L15 15Z" fill="#20d060" />
                            <path d="M1 9V15M4 8V13" stroke="#20c8e8" />
                            <text x="8" y="6" fontSize="7" textAnchor="middle" fill="#fff">REW</text>
                        </svg>
                    </AppBtn>
                </Apps>
                <Tray>
                    {TRAY.map(([name, art]) => (
                        <TaskBtn key={name} aria-label={name}><Glyph>{art}</Glyph></TaskBtn>
                    ))}
                    <Language>ENG</Language>
                    <Clock>12:54 AM</Clock>
                    <TaskBtn aria-label="Notifications">
                        <Glyph><path d="M0 0H16V13H10L8 16L6 13H0Z" fill="#fff" /><path d="M3 3.500H13M3 6.500H13M3 9.500H9" stroke="#182642" /></Glyph>
                    </TaskBtn>
                    <ShowDesktop aria-label="Show desktop" />
                </Tray>
            </Taskbar>
        </Window>
    );
};

export default App;
